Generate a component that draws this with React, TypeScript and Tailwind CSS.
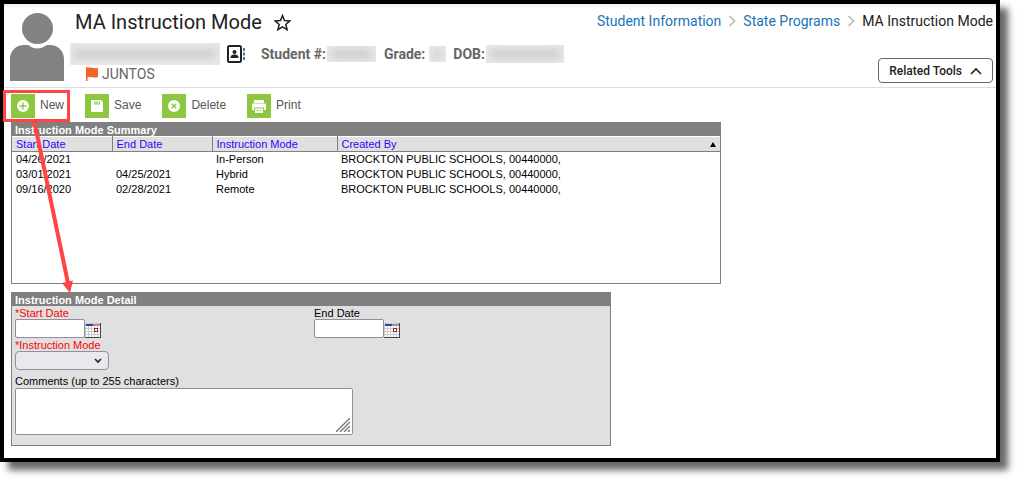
import React from 'react';
import { clsx } from 'clsx';

const records = [
  { start: '04/26/2021', end: '', mode: 'In-Person', by: 'BROCKTON PUBLIC SCHOOLS, 00440000,' },
  { start: '03/01/2021', end: '04/25/2021', mode: 'Hybrid', by: 'BROCKTON PUBLIC SCHOOLS, 00440000,' },
  { start: '09/16/2020', end: '02/28/2021', mode: 'Remote', by: 'BROCKTON PUBLIC SCHOOLS, 00440000,' },
];

const NewIcon = () => (
  <svg viewBox="0 0 24 24" className="w-6 h-6">
    <circle cx="12" cy="12" r="6" fill="#fff" />
    <path d="M12 8.5v7M8.5 12h7" stroke="#8dc63f" strokeWidth="1.4" />
  </svg>
);

const SaveIcon = () => (
  <svg viewBox="0 0 24 24" className="w-6 h-6">
    <path d="M7 6h9l2 2v9q0 1-1 1H7q-1 0-1-1V7q0-1 1-1z" fill="#fff" />
    <path d="M9 7h6v3.5H9z" fill="#8dc63f" />
    <path d="M9 7h3v2.500H9z" fill="#fff" opacity="0.5" />
    <path d="M12.500 7h1.500v2.500h-1.500z" fill="#fff" />
  </svg>
);

const DeleteIcon = () => (
  <svg viewBox="0 0 24 24" className="w-6 h-6">
    <circle cx="12" cy="12" r="6" fill="#fff" />
    <path d="M9.7 9.7l4.6 4.6M14.3 9.7l-4.6 4.6" stroke="#8dc63f" strokeWidth="1.4" />
  </svg>
);

const PrintIcon = () => (
  <svg viewBox="0 0 24 24" className="w-6 h-6">
    <path d="M7 6h10v3H7zM6 9.500h12q1 0 1 1V16h-2v-2.500H7V16H5v-5.500q0-1 1-1z" fill="#fff" />
    <path d="M8 14.500h8V19H8z" fill="#fff" />
    <path d="M9 16.500h6" stroke="#8dc63f" strokeWidth="0.6" />
  </svg>
);

const tools = [
  { label: 'New', icon: NewIcon, marked: true },
  { label: 'Save', icon: SaveIcon, marked: false },
  { label: 'Delete', icon: DeleteIcon, marked: false },
  { label: 'Print', icon: PrintIcon, marked: false },
];

const Redacted: React.FC<{ className: string }> = ({ className }) => (
  <span aria-hidden="true" className={clsx('flex items-center shrink-0 overflow-hidden bg-[#e9e9e9]', className)}>
    <span className="w-full h-2 mx-1 bg-[#c8c8c8] blur-[4px]" />
  </span>
);

const Chevron = () => (
  <svg viewBox="0 0 8 12" className="w-2 h-3" fill="none" stroke="#b8b8b8" strokeWidth="1.6">
    <path d="M1.5 1l5 5-5 5" />
  </svg>
);

const CalendarIcon = () => (
  <svg viewBox="0 0 16 15" className="w-4 h-[15px]" shapeRendering="crispEdges">
    <rect width="16" height="15" fill="#444" />
    <rect width="15" height="14" fill="#c8c8c8" />
    <path d="M1 3h14v11H1z" fill="#fff" />
    <path d="M1 1h7v2H1z" fill="#3c3cb0" />
    <path d="M8 1h7v2H8z" fill="#999" />
    <path d="M3.5 3v11M6.5 3v11M9.5 3v11M12.5 3v11M1 5.5h14M1 8.5h14M1 11.5h14" stroke="#ccc" />
    <path d="M9.5 5.5h3v3h-3z" fill="#fff" stroke="#a22" />
  </svg>
);

const DateField: React.FC<{ id: string; label: string; required?: boolean }> = ({ id, label, required }) => (
  <div>
    <label htmlFor={id} className={clsx('block h-[13px] leading-[15px]', required && 'text-[#f00]')}>
      {required && '*'}{label}
    </label>
    <div className="flex items-end">
      <input id={id} type="text" className="w-[70px] h-[19px] px-1 bg-white border border-[#8f8f9d] rounded-xs" />
      <button type="button" aria-label={`Pick ${label}`}><CalendarIcon /></button>
    </div>
  </div>
);

const Header = () => (
  <header className="flex items-start h-[84px] pl-1.5 pr-[3px] border-b border-[#ddd] bg-linear-to-b from-[#eee] to-white to-[4px] font-[Roboto,sans-serif]">
    <svg viewBox="0 0 54 68" className="w-[54px] h-[68px] mt-[9px] shrink-0" fill="#828282">
      <circle cx="27.5" cy="15.5" r="15.5" />
      <path d="M0 68V46c0-8 6-14 14-14h4q9 7 19 0h3c8 0 14 6 14 14v22z" />
    </svg>

    <div className="flex-1 ml-1.5 pt-1">
      <div className="flex items-center gap-3 h-7 pl-[5px]">
        <h1 className="text-xl leading-7 text-[#222] whitespace-nowrap">MA Instruction Mode</h1>
        <button type="button" aria-label="Add to favorites">
          <svg viewBox="0 0 17 17" className="w-[17px] h-[17px]" fill="none" stroke="#222" strokeWidth="1.5">
            <path d="M8.5 1.5l2 5 5.4.4-4.1 3.5 1.3 5.3-4.6-2.9-4.6 2.9 1.3-5.3L1.1 6.9l5.4-.4z" />
          </svg>
        </button>
      </div>
      <div className="flex items-center h-9 text-sm font-bold text-[#666] whitespace-nowrap">
        <Redacted className="w-[150px] h-[22px]" />
        <svg viewBox="0 0 18 18" className="w-[18px] h-[18px] ml-[7px] mr-4 shrink-0">
          <rect x="1" y="1" width="13" height="16" rx="1.5" fill="#fff" stroke="#222" strokeWidth="2" />
          <circle cx="7.5" cy="7" r="2" fill="#222" />
          <path d="M3.5 13c0-3 2-3.5 4-3.5s4 .5 4 3.5z" fill="#222" />
          <path d="M17 3v3M17 7.500v3M17 12v3" stroke="#3a78b0" strokeWidth="2" />
        </svg>
        <span>Student #:</span>
        <Redacted className="w-[49px] h-4 ml-px mr-2" />
        <span>Grade:</span>
        <Redacted className="w-[17px] h-4 ml-1 mr-[7px]" />
        <span>DOB:</span>
        <Redacted className="w-[78px] h-[18px] ml-px" />
      </div>
      <div className="flex items-center gap-1 h-1 pl-4 text-sm text-[#666]">
        <svg viewBox="0 0 12 14" className="w-3 h-3.5" fill="#f26522">
          <path d="M0 0h1.500v1c3-1.500 5 1 10.500 0v9c-5 1.500-7-1-10.500.5V14H0z" />
        </svg>
        <span>JUNTOS</span>
      </div>
    </div>

    <div className="flex flex-col items-end">
      <nav aria-label="Breadcrumb" className="flex items-center gap-[7px] mt-[7px] text-sm whitespace-nowrap">
        <a href="#student-information" className="text-[#1874b8]">Student Information</a>
        <Chevron />
        <a href="#state-programs" className="text-[#1874b8]">State Programs</a>
        <Chevron />
        <span className="text-[#222]">MA Instruction Mode</span>
      </nav>
      <button type="button" className="flex items-center gap-2 h-[25px] mt-[27px] px-2.5 border border-[#666] rounded text-xs font-medium text-[#222]">
        Related Tools
        <svg viewBox="0 0 12 8" className="w-3 h-2" fill="none" stroke="#222" strokeWidth="1.6">
          <path d="M1 7l5-5 5 5" />
        </svg>
      </button>
    </div>
  </header>
);

const Toolbar = () => (
  <div className="flex gap-[21px] pt-1.5 pb-1 pl-[7px]">
    {tools.map((tool) => (
      <button key={tool.label} type="button" className="relative flex items-center gap-[5px] text-xs text-[#555]">
        <span className="bg-[#8dc63f]"><tool.icon /></span>
        <span className="pb-0.5">{tool.label}</span>
        {/* Callout frame and the arrow that leads to the detail panel */}
        {tool.marked && (
          <span className="absolute -left-2 -right-1.5 -inset-y-1 border-3 border-[#f44] pointer-events-none">
            <svg viewBox="0 0 50 180" className="absolute top-6 left-5 w-[50px] h-[180px] z-10">
              <path d="M8 3L42 166" stroke="#f44" strokeWidth="4" />
              <path d="M36 166l11-2.500L44 176z" fill="#f44" />
            </svg>
          </span>
        )}
      </button>
    ))}
  </div>
);

const Summary = () => (
  <section className="w-[710px] max-w-full h-[162px] border border-[#808080] text-[11px]">
    <h2 className="h-[13px] pl-[3px] bg-[#808080] text-white font-bold leading-[14px]">Instruction Mode Summary</h2>
    <table className="w-full table-fixed border-collapse">
      <thead>
        <tr className="h-[15px] bg-[#e0e0e0] border-t border-t-white border-b border-b-[#808080] text-left text-[#30f] leading-[13px]">
          <th className="w-[100px] pl-1 font-normal border-r border-[#808080]">Start Date</th>
          <th className="w-[100px] pl-1 font-normal border-r border-[#808080]">End Date</th>
          <th className="w-[125px] pl-1 font-normal border-r border-[#808080]">Instruction Mode</th>
          <th className="px-1 font-normal">
            <span className="flex justify-between items-center">
              Created By
              <svg viewBox="0 0 6 5" className="w-1.5 h-[5px]"><path d="M3 0l3 5H0z" /></svg>
            </span>
          </th>
        </tr>
      </thead>
      <tbody>
        {records.map((record) => (
          <tr key={record.start} className="h-[15px] leading-[15px]">
            <td className="pl-1">{record.start}</td>
            <td className="pl-1">{record.end}</td>
            <td className="pl-1">{record.mode}</td>
            <td className="pl-1">{record.by}</td>
          </tr>
        ))}
      </tbody>
    </table>
  </section>
);

const Detail = () => (
  <section className="w-[600px] max-w-full mt-2 pb-2.5 border border-[#808080] bg-[#e0e0e0] text-[11px]">
    <h2 className="h-[13px] pl-[3px] bg-[#808080] text-white font-bold leading-[14px]">Instruction Mode Detail</h2>
    <form>
      <div className="grid grid-cols-2 *:pl-[3px]">
        <DateField id="start-date" label="Start Date" required />
        <DateField id="end-date" label="End Date" />
      </div>
      <div className="pl-[3px]">
        <label htmlFor="mode" className="block h-[13px] leading-[15px] text-[#f00]">*Instruction Mode</label>
        <div className="relative w-[94px]">
          <select id="mode" className="block appearance-none w-full h-[19px] px-1 bg-[#e9e9ed] border border-[#8f8f9d] rounded">
            <option></option>
            <option>In-Person</option>
            <option>Hybrid</option>
            <option>Remote</option>
          </select>
          <svg viewBox="0 0 8 6" className="absolute right-[7px] top-[7px] w-2 h-1.5 pointer-events-none" fill="none" stroke="#222" strokeWidth="1.6">
            <path d="M1 1l3 3 3-3" />
          </svg>
        </div>
        <label htmlFor="comments" className="block mt-1 leading-[14px]">Comments (up to 255 characters)</label>
        <div className="relative w-[338px] max-w-full">
          <textarea id="comments" className="block resize-none w-full h-[47px] p-1 bg-white border border-[#8f8f9d] rounded-xs" />
          <svg viewBox="0 0 14 14" className="absolute right-[3px] bottom-[3px] w-3.5 h-3.5 pointer-events-none" stroke="#777" strokeWidth="1.4">
            <path d="M0 14L14 0M4 14L14 4M8 14l6-6M12 14l2-2" />
          </svg>
        </div>
      </div>
    </form>
  </section>
);

const App: React.FC = () => (
  <div className="bg-white pr-6 pb-6 font-['Liberation_Sans',Arial,sans-serif] text-black">
    <main className="border-4 border-black pb-3 bg-white shadow-[8px_8px_7px_0_rgba(0,0,0,0.6)]">
      <Header />
      <Toolbar />
      <div className="pl-[7px]">
        <Summary />
        <Detail />
      </div>
    </main>
  </div>
);

export default App;
